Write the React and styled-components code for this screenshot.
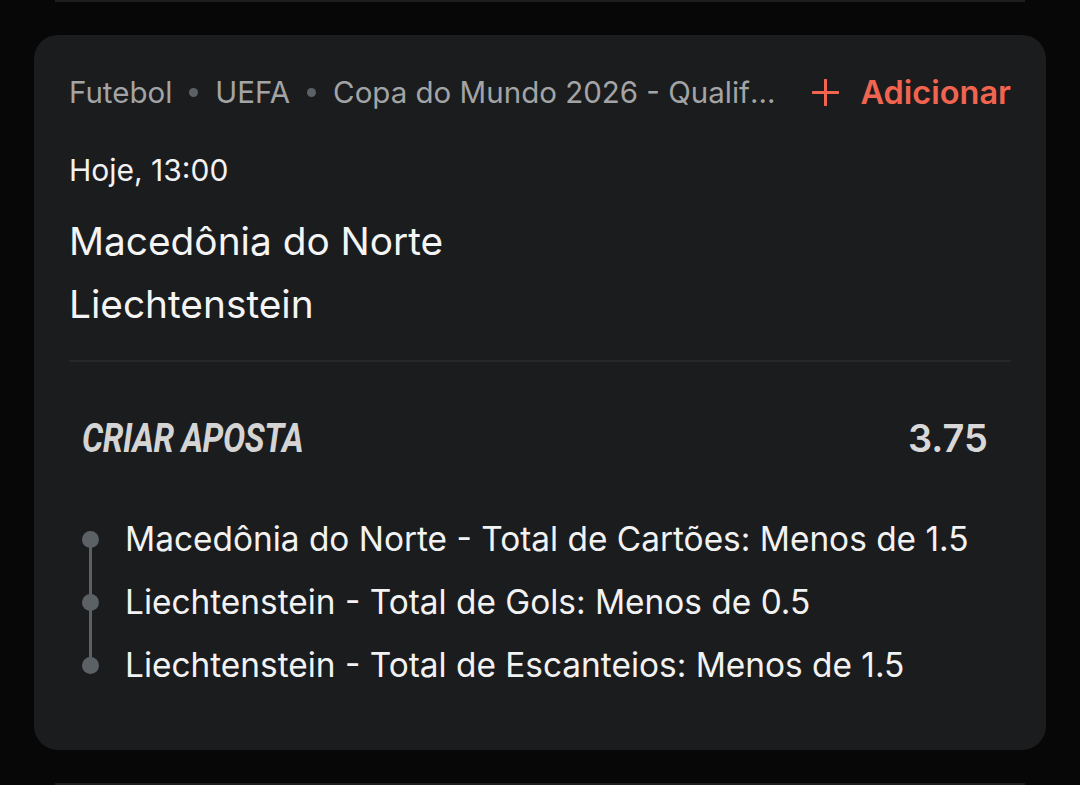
import React from 'react'
import styled, { createGlobalStyle } from 'styled-components'

const Global = createGlobalStyle`
  html, body {
    margin: 0;
    background: #070707;
    font-family: Inter, "Noto Sans", sans-serif;
    -webkit-font-smoothing: antialiased;
  }
`

const Page = styled.div`
  width: 1080px;
  height: 785px;
  overflow: hidden;
  display: flex;
  flex-direction: column;
  align-items: center;
`

const EdgeLine = styled.div`
  width: 970px;
  height: 2px;
  flex-shrink: 0;
  background: #1d1e20;
  ${p => p.$bottom && 'margin-top: auto;'}
`

const Card = styled.div`
  width: 1012px;
  box-sizing: border-box;
  background: #1b1c1e;
  border-radius: 24px;
  padding: 34px 35px 54px 35px;
  margin-top: 33px;
`

const TopRow = styled.div`
  display: flex;
  align-items: center;
  justify-content: space-between;
  height: 46px;
`

const Crumbs = styled.div`
  display: flex;
  align-items: center;
  gap: 17px;
  font-size: 29.5px;
  color: #a3a4a6;
  white-space: nowrap;
  min-width: 0;
`

const Crumb = styled.span`
  ${p => p.$truncate && `
    overflow: hidden;
    text-overflow: ellipsis;
    max-width: 448px;
  `}
`

const Dot = styled.span`
  width: 9px;
  height: 9px;
  border-radius: 50%;
  background: #5c6166;
  flex-shrink: 0;
`

const AddButton = styled.button`
  display: flex;
  align-items: center;
  gap: 21px;
  background: none;
  border: none;
  padding: 0;
  font-family: inherit;
  font-size: 32.5px;
  font-weight: 600;
  color: #f16550;
  white-space: nowrap;
`

const Time = styled.div`
  margin-top: 37px;
  font-size: 30px;
  line-height: 36px;
  color: #f2f2f2;
`

const Teams = styled.div`
  margin-top: 30px;
  display: flex;
  flex-direction: column;
  gap: 17px;
  font-size: 38.8px;
  color: #f4f4f4;
  line-height: 46px;
`

const Divider = styled.hr`
  border: none;
  height: 2px;
  background: #262729;
  margin: 33px 0 0;
`

const BetHead = styled.div`
  display: flex;
  align-items: center;
  justify-content: space-between;
  height: 50px;
  padding: 0 23px 0 13px;
  margin-top: 51px;
`

const BetTitle = styled.div`
  font-family: Roboto, sans-serif;
  font-weight: 700;
  font-style: italic;
  font-size: 40px;
  color: #d4d4d4;
  transform: scaleX(0.83);
  transform-origin: left center;
  letter-spacing: -0.5px;
`

const Odds = styled.div`
  font-size: 38px;
  font-weight: 600;
  color: #d8d8d8;
`

const Legs = styled.ul`
  list-style: none;
  margin: 44px 0 0;
  padding: 0 0 0 13px;
`

const Leg = styled.li`
  position: relative;
  display: flex;
  align-items: center;
  height: 63px;
  padding-left: 43px;
  font-size: 33.4px;
  color: #f2f2f2;

  &::before {
    content: '';
    position: absolute;
    left: 0;
    top: 50%;
    width: 17px;
    height: 17px;
    margin-top: -8px;
    border-radius: 50%;
    background: #5c6166;
  }

  &:not(:last-child)::after {
    content: '';
    position: absolute;
    left: 7px;
    top: 50%;
    width: 3px;
    height: 63px;
    background: #5c6166;
  }
`

const Plus = () => (
  <svg width="27" height="27" viewBox="0 0 27 27">
    <path d="M13.5 1v25M1 13.5h25" stroke="#f16550" strokeWidth="3" strokeLinecap="round" />
  </svg>
)

const legs = [
  'Macedônia do Norte - Total de Cartões: Menos de 1.5',
  'Liechtenstein - Total de Gols: Menos de 0.5',
  'Liechtenstein - Total de Escanteios: Menos de 1.5',
]

export default function App() {
  return (
    <Page>
      <Global />
      <EdgeLine />
      <Card>
        <TopRow>
          <Crumbs>
            <Crumb>Futebol</Crumb>
            <Dot />
            <Crumb>UEFA</Crumb>
            <Dot />
            <Crumb $truncate>Copa do Mundo 2026 - Qualificação</Crumb>
          </Crumbs>
          <AddButton>
            <Plus />
            Adicionar
          </AddButton>
        </TopRow>
        <Time>Hoje, 13:00</Time>
        <Teams>
          <div>Macedônia do Norte</div>
          <div>Liechtenstein</div>
        </Teams>
        <Divider />
        <BetHead>
          <BetTitle>CRIAR APOSTA</BetTitle>
          <Odds>3.75</Odds>
        </BetHead>
        <Legs>
          {legs.map(l => (
            <Leg key={l}>{l}</Leg>
          ))}
        </Legs>
      </Card>
      <EdgeLine $bottom />
    </Page>
  )
}
